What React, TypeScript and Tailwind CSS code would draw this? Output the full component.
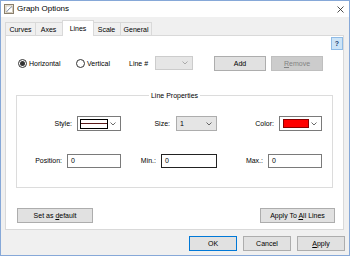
import React from "react";

const Chevron = ({ color = "#444" }: { color?: string }) => (
  <svg width="6" height="4" viewBox="0 0 6 4" className="shrink-0">
    <polyline points="0.5,0.5 3,3 5.5,0.5" fill="none" stroke={color} strokeWidth="0.8" />
  </svg>
);

const Btn = ({
  children,
  w,
  disabled,
  def,
}: {
  children: React.ReactNode;
  w: string;
  disabled?: boolean;
  def?: boolean;
}) => (
  <div
    className={`${w} h-[15px] flex items-center justify-center border ${
      disabled
        ? "bg-[#cccccc] border-[#bfbfbf] text-[#838383]"
        : def
        ? "bg-[#e1e1e1] border-[#0078d7] text-black"
        : "bg-[#e1e1e1] border-[#adadad] text-black"
    }`}
  >
    <span className="whitespace-pre">{children}</span>
  </div>
);

export default function App() {
  return (
    <div className="w-[350px] h-[256px] flex flex-col border border-[#86a8d8] bg-[#f0f0f0] font-['Liberation_Sans',Arial,sans-serif] text-[7px] leading-none text-black overflow-hidden select-none">
      {/* Title bar */}
      <div className="h-[16px] bg-white flex items-center shrink-0">
        <svg width="10" height="10" viewBox="0 0 10 10" className="ml-[3px] shrink-0">
          <rect x="0.5" y="0.5" width="9" height="9" fill="#f4efe4" stroke="#8a7f6c" />
          <rect x="2" y="2" width="6.5" height="6.5" fill="#ffffff" stroke="#b9ad96" strokeWidth="0.6" />
          <polyline points="2.5,8 5,5 8,2.5" fill="none" stroke="#5b6b8a" strokeWidth="0.8" />
        </svg>
        <span className="ml-[3px] text-[8px]">Graph Options</span>
        <div className="flex-1" />
        <svg width="7" height="7" viewBox="0 0 7 7" className="mr-[5px] mt-[1px] shrink-0">
          <line x1="0.5" y1="0.5" x2="6.5" y2="6.5" stroke="#222" strokeWidth="0.8" />
          <line x1="6.5" y1="0.5" x2="0.5" y2="6.5" stroke="#222" strokeWidth="0.8" />
        </svg>
      </div>

      {/* Body */}
      <div className="flex-1 flex flex-col px-[4px]">
        {/* Tabs */}
        <div className="mt-[4px] h-[14px] flex items-end">
          <div className="w-[31px] h-[13px] border-t border-l border-r border-[#d9d9d9] flex items-center justify-center">
            Curves
          </div>
          <div className="-ml-[1px] w-[28px] h-[13px] border-t border-r border-[#d9d9d9] flex items-center justify-center">
            Axes
          </div>
          <div className="relative z-10 -ml-[1px] -mb-[1px] w-[32px] h-[16px] bg-white border-t border-l border-r border-[#d9d9d9] flex items-center justify-center pb-[1px]">
            Lines
          </div>
          <div className="-ml-[1px] w-[28px] h-[13px] border-t border-r border-[#d9d9d9] flex items-center justify-center">
            Scale
          </div>
          <div className="w-[31px] h-[13px] border-t border-r border-[#d9d9d9] flex items-center justify-center">
            General
          </div>
        </div>

        {/* Panel */}
        <div className="w-[339px] h-[195px] bg-white border border-[#d9d9d9] flex flex-col">
          {/* help */}
          <div className="h-[15px] pt-[1px] flex justify-end">
            <div className="w-[12px] h-[13px] bg-[#cce4f7] border border-[#8fbbe6] flex items-center justify-center font-bold text-[7px] text-[#1e3f73]">
              ?
            </div>
          </div>

          {/* Radio row */}
          <div className="mt-[5px] h-[14px] flex items-center">
            <div className="ml-[12px] w-[58px] flex items-center">
              <div className="w-[9px] h-[9px] rounded-full border border-[#333] flex items-center justify-center">
                <div className="w-[5px] h-[5px] rounded-full bg-[#333]" />
              </div>
              <span className="ml-[2px]">Horizontal</span>
            </div>
            <div className="w-[53px] flex items-center">
              <div className="w-[9px] h-[9px] rounded-full border border-[#333]" />
              <span className="ml-[2px]">Vertical</span>
            </div>
            <div className="w-[26px]">Line #</div>
            <div className="w-[38px] h-[14px] bg-[#e6e6e6] border border-[#cccccc] flex items-center justify-end pr-[4px]">
              <Chevron color="#9a9a9a" />
            </div>
            <div className="ml-[21px]">
              <Btn w="w-[52px]">Add</Btn>
            </div>
            <div className="ml-[5px]">
              <Btn w="w-[52px]" disabled>
                <span className="underline">R</span>emove
              </Btn>
            </div>
          </div>

          {/* Group box */}
          <div className="ml-[10px] mt-[25px] w-[317px] h-[93px] border border-[#dcdcdc] flex flex-col">
            <div className="-mt-[4px] h-[8px] flex justify-center">
              <span className="bg-white px-[2px]">Line Properties</span>
            </div>

            {/* Row 1 */}
            <div className="mt-[16px] h-[15px] flex items-center">
              <div className="w-[55px] text-right">Style:</div>
              <div className="ml-[5px] w-[44px] h-[15px] bg-white border border-[#7a7a7a] flex items-center pl-[2px] pr-[4px]">
                <div className="w-[28px] h-[10px] border border-black flex items-center">
                  <div className="w-full h-[1.5px] bg-[#5a1a1a]" />
                </div>
                <div className="flex-1" />
                <Chevron />
              </div>
              <div className="w-[49px] text-right">Size:</div>
              <div className="ml-[6px] w-[41px] h-[15px] bg-[#e5e5e5] border border-[#adadad] flex items-center pl-[3px] pr-[4px]">
                <span>1</span>
                <div className="flex-1" />
                <Chevron />
              </div>
              <div className="w-[57px] text-right">Color:</div>
              <div className="ml-[5px] w-[43px] h-[15px] bg-white border border-[#7a7a7a] flex items-center pl-[3px] pr-[4px]">
                <div className="w-[26px] h-[9px] bg-[#ff0000] border border-[#8a0000]" />
                <div className="flex-1" />
                <Chevron />
              </div>
            </div>

            {/* Row 2 */}
            <div className="mt-[22px] h-[15px] flex items-center">
              <div className="w-[45px] text-right">Position:</div>
              <div className="ml-[5px] w-[54px] h-[14px] bg-white border border-[#7a7a7a] flex items-center pl-[3px]">
                0
              </div>
              <div className="w-[35px] text-right">Min.:</div>
              <div className="ml-[5px] w-[56px] h-[14px] bg-white border border-[#222] flex items-center pl-[3px]">
                0
              </div>
              <div className="w-[46px] text-right">Max.:</div>
              <div className="ml-[5px] w-[54px] h-[14px] bg-white border border-[#7a7a7a] flex items-center pl-[3px]">
                0
              </div>
            </div>
          </div>

          {/* Bottom panel buttons */}
          <div className="mt-[20px] flex justify-between pl-[11px] pr-[8px]">
            <Btn w="w-[76px]">
              Set as <span className="underline">d</span>efault
            </Btn>
            <Btn w="w-[75px]">
              Apply To <span className="underline">A</span>ll Lines
            </Btn>
          </div>
        </div>

        {/* Dialog buttons */}
        <div className="mt-[6px] flex justify-end gap-[6px]">
          <Btn w="w-[48px]" def>
            OK
          </Btn>
          <Btn w="w-[48px]">Cancel</Btn>
          <Btn w="w-[48px]">
            <span className="underline">A</span>pply
          </Btn>
        </div>
      </div>
    </div>
  );
}
